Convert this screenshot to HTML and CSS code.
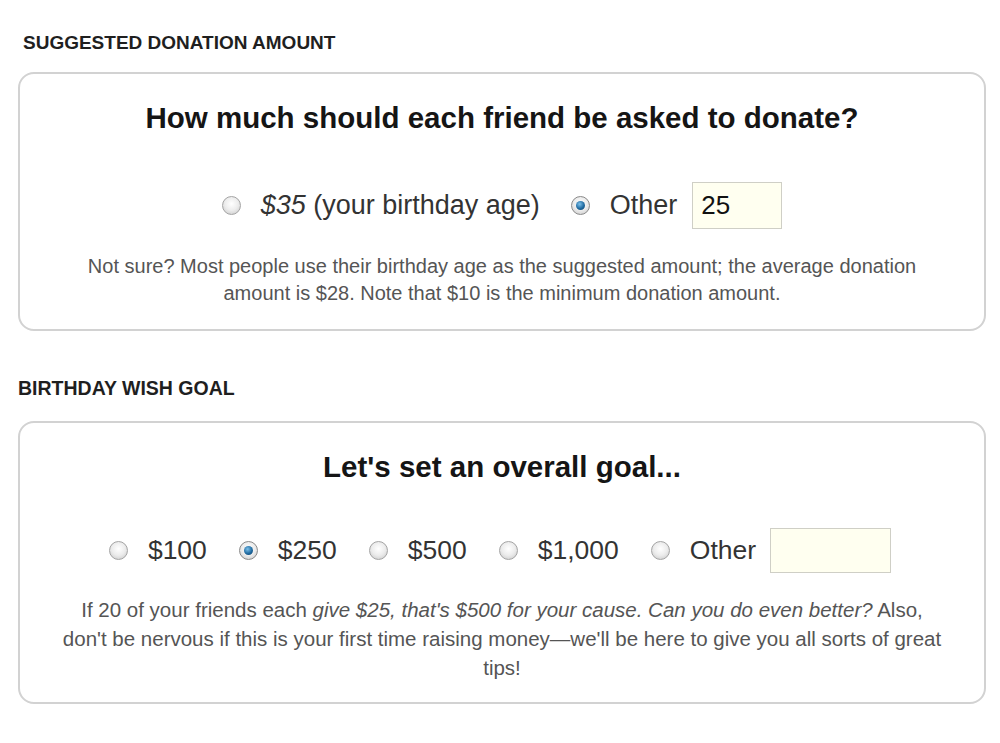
FILE: index.html
```html
<!DOCTYPE html>
<html>
<head>
<meta charset="utf-8">
<link rel="stylesheet" href="styles.css">
</head>
<body>
<div class="page">
  <section class="section first">
    <h2 class="label">SUGGESTED DONATION AMOUNT</h2>
    <div class="box box-one">
      <h1 class="question">How much should each friend be asked to donate?</h1>
      <div class="options">
        <label class="option"><span class="radio"></span><span class="opt-text"><em>$35</em> (your birthday age)</span></label>
        <label class="option"><span class="radio checked"></span><span class="opt-text">Other</span><span class="field field-one">25</span></label>
      </div>
      <p class="note">Not sure? Most people use their birthday age as the suggested amount; the average donation amount is $28. Note that $10 is the minimum donation amount.</p>
    </div>
  </section>
  <section class="section second">
    <h2 class="label">BIRTHDAY WISH GOAL</h2>
    <div class="box box-two">
      <h1 class="question">Let's set an overall goal...</h1>
      <div class="options options-goal">
        <label class="option"><span class="radio"></span><span class="opt-text">$100</span></label>
        <label class="option"><span class="radio checked"></span><span class="opt-text">$250</span></label>
        <label class="option"><span class="radio"></span><span class="opt-text">$500</span></label>
        <label class="option"><span class="radio"></span><span class="opt-text">$1,000</span></label>
        <label class="option"><span class="radio"></span><span class="opt-text">Other</span><span class="field field-two"></span></label>
      </div>
      <p class="note note-goal">If 20 of your friends each <em>give $25, that's $500 for your cause. Can you do even better?</em> Also, don't be nervous if this is your first time raising money—we'll be here to give you all sorts of great tips!</p>
    </div>
  </section>
</div>
</body>
</html>
```
FILE: styles.css
```css
html, body {
  margin: 0;
  padding: 0;
  background: #ffffff;
}
body {
  font-family: "Liberation Sans", Arial, sans-serif;
  color: #222;
}
.page {
  padding: 32px 12px 0 18px;
}
.label {
  margin: 0 0 18px 5px;
  font-size: 19px;
  line-height: 22px;
  font-weight: bold;
  color: #1f1f1f;
}
.second {
  margin-top: 46px;
}
.second .label {
  margin-left: 0;
  font-size: 19.5px;
  margin-bottom: 22px;
}
.box {
  border: 2px solid #d2d2d2;
  border-radius: 16px;
  width: 968px;
  box-sizing: border-box;
  text-align: center;
}
.box-one {
  padding: 27px 20px 22px;
}
.box-two {
  padding: 27px 20px 20px;
}
.question {
  margin: 0;
  font-size: 29.5px;
  line-height: 34px;
  font-weight: bold;
  color: #151515;
}
.options {
  display: flex;
  justify-content: center;
  align-items: center;
  gap: 31px;
  margin-top: 47px;
  font-size: 27px;
  color: #333;
}
.options-goal {
  margin-top: 44px;
  gap: 32px;
  font-size: 26.5px;
  padding-right: 4px;
}
.option {
  display: flex;
  align-items: center;
  gap: 20px;
}
.radio {
  width: 19px;
  height: 19px;
  border-radius: 50%;
  border: 1px solid #a4a4a4;
  background: radial-gradient(circle at 50% 40%, #ffffff 0%, #ececec 50%, #c4c4c4 100%);
  box-sizing: border-box;
  position: relative;
  flex: none;
}
.radio.checked {
  border-color: #8a8a8a;
}
.radio.checked::after {
  content: "";
  position: absolute;
  left: 4px;
  top: 4px;
  width: 9px;
  height: 9px;
  border-radius: 50%;
  background: radial-gradient(circle at 40% 35%, #7cc0ea 0%, #1f6aa0 55%, #0b3a63 100%);
}
.opt-text em {
  font-style: italic;
}
.field {
  display: inline-block;
  background: #fffff0;
  border: 1px solid #cfcfc6;
  text-align: left;
  box-sizing: border-box;
  color: #111;
}
.field-one {
  width: 90px;
  height: 47px;
  line-height: 45px;
  padding-left: 8px;
  margin-left: -5px;
  font-size: 26px;
}
.field-two {
  width: 121px;
  height: 45px;
  margin-left: -6px;
}
.note {
  margin: 24px 0 0;
  padding: 0 40px;
  font-size: 20px;
  line-height: 27px;
  color: #555;
}
.note-goal {
  margin-top: 22px;
  padding: 0 22px;
  font-size: 20.5px;
  line-height: 29px;
}
.note-goal em {
  font-style: italic;
}
```
